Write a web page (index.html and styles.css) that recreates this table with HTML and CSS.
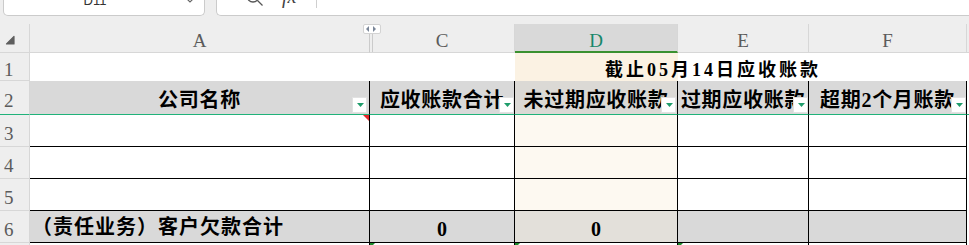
FILE: index.html
```html
<!DOCTYPE html>
<html lang="zh-CN">
<head>
<meta charset="utf-8">
<title>应收账款</title>
<link rel="stylesheet" href="styles.css">
</head>
<body>
<div class="toolbar">
  <div class="namebox">
    <span class="cellref">D11</span>
    <svg class="chev" viewBox="0 0 8 6"><polyline points="0.5,0.5 4,4 7.5,0.5"/></svg>
  </div>
  <div class="formula">
    <svg class="search" viewBox="0 0 20 16"><circle cx="8" cy="6" r="6"/><line x1="12.5" y1="10.5" x2="17.5" y2="15.5"/></svg>
    <span class="fx">fx</span>
    <span class="fsep"></span>
  </div>
</div>

<div class="sheet">
  <div class="strip"></div>

  <!-- column headers -->
  <div class="corner"><svg width="29" height="28" viewBox="0 0 29 28"><path d="M14 12.5 L14 20 L6.5 20 Z"/></svg></div>
  <div class="ch ch-a">A<span class="unhide"><svg viewBox="0 0 16 8"><polygon points="5,1 5,7 2,4"/><polygon points="9,1 9,7 12,4"/></svg></span></div>
  <div class="ch ch-c">C</div>
  <div class="ch ch-sel">D</div>
  <div class="ch">E</div>
  <div class="ch">F</div>
  <div class="ch ch-g"></div>

  <!-- row 1 -->
  <div class="rh">1</div>
  <div class="c"></div>
  <div class="c"></div>
  <div class="c title">截止05月14日应收账款</div>
  <div class="c"></div>

  <!-- row 2: table headings with filter buttons -->
  <div class="rh rh-frozen">2</div>
  <div class="c hd">公司名称<span class="fbtn fbtn-a"></span></div>
  <div class="c hd">应收账款合计<span class="fbtn"></span></div>
  <div class="c hd hd-sel">未过期应收账款<span class="fbtn fbtn-d"></span></div>
  <div class="c hd">过期应收账款<span class="fbtn"></span></div>
  <div class="c hd">超期2个月账款<span class="fbtn"></span></div>
  <div class="c frozen"></div>

  <!-- rows 3-5 -->
  <div class="rh">3</div>
  <div class="c b note"></div>
  <div class="c b"></div>
  <div class="c b sel"></div>
  <div class="c b"></div>
  <div class="c b"></div>
  <div class="c"></div>

  <div class="rh">4</div>
  <div class="c b"></div>
  <div class="c b"></div>
  <div class="c b sel"></div>
  <div class="c b"></div>
  <div class="c b"></div>
  <div class="c"></div>

  <div class="rh">5</div>
  <div class="c b"></div>
  <div class="c b"></div>
  <div class="c b sel"></div>
  <div class="c b"></div>
  <div class="c b"></div>
  <div class="c"></div>

  <!-- row 6: totals -->
  <div class="rh">6</div>
  <div class="c b tot tot-label">（责任业务）客户欠款合计</div>
  <div class="c b tot tot-num">0</div>
  <div class="c b tot tot-sel tot-num">0</div>
  <div class="c b tot"></div>
  <div class="c b tot"></div>
  <div class="c"></div>

  <!-- row 7 -->
  <div class="rh"></div>
  <div class="c r7"></div>
  <div class="c r7 err"></div>
  <div class="c r7 err"></div>
  <div class="c r7 err"></div>
  <div class="c r7"></div>
  <div class="c"></div>
</div>
</body>
</html>
```

FILE: styles.css
```css
* { box-sizing: border-box; }
html, body { margin: 0; }
body {
  width: 969px;
  height: 245px;
  overflow: hidden;
  background: #fff;
  font-family: "Liberation Serif", "Noto Sans CJK SC", serif;
}

/* name box + formula bar */
.toolbar { display: flex; height: 16px; background: #eeeeee; }
.namebox {
  display: flex;
  width: 202px;
  height: 16px;
  margin-left: 3px;
  background: #fff;
  border: 1px solid #cbcbcb;
  border-top: 0;
  border-radius: 0 0 5px 5px;
  overflow: hidden;
}
.cellref {
  flex: 1;
  margin-top: -6px;
  font: 13px/13px "Liberation Sans", sans-serif;
  color: #333;
  text-align: center;
}
.chev { width: 8px; height: 6px; margin: -2px 10px 0 0; fill: none; stroke: #666; stroke-width: 1.2; }
.formula {
  display: flex;
  flex: 1;
  height: 16px;
  margin-left: 11px;
  background: #fff;
  border-left: 1px solid #cbcbcb;
  border-bottom: 1px solid #cbcbcb;
  border-bottom-left-radius: 5px;
  overflow: hidden;
}
.search { flex: none; width: 20px; height: 16px; margin: -10px 0 0 28px; fill: none; stroke: #555; stroke-width: 1.3; }
.fx { flex: none; width: 34px; margin: -14px 0 0 17px; font: italic 20px/20px "Liberation Serif", serif; color: #444; }
.fsep { flex: none; width: 1px; height: 8px; background: #cfcfcf; }

/* sheet grid */
.sheet {
  display: grid;
  grid-template-columns: 30px 340px 145px 163px 131px 158px 1fr;
  grid-template-rows: 8px 29px 28px 34px repeat(4, 32px) 12px;
}
.strip { grid-column: 1 / -1; background: #eee; }

.corner, .ch, .rh {
  background: #eee;
  border-right: 1px solid #d7d7d7;
  border-bottom: 1px solid #d7d7d7;
  color: #5b5b5b;
  font-size: 19px;
  line-height: 1;
}
.corner svg { display: block; fill: #5e5e5e; stroke: #5e5e5e; stroke-width: 1.2; stroke-linejoin: round; }

.ch { position: relative; display: flex; align-items: center; justify-content: center; padding-top: 5px; }
.ch-a { border-right-color: #cbcbcb; }
.ch-c { background: linear-gradient(to right, #eee 0 2px, #cbcbcb 2px 3px, #eee 3px); }
.ch-sel { background: #d9d9d9; color: #17876a; border-bottom: 2px solid #3a9130; }
.ch-g { border-right: 0; }
.unhide {
  position: absolute;
  top: 0;
  right: -12px;
  z-index: 2;
  width: 18px;
  height: 10px;
  background: #fff;
  border: 1px solid #d3d3d3;
  border-radius: 2px;
}
.unhide svg { display: block; width: 16px; height: 8px; fill: #7a8698; }

.rh { display: flex; align-items: center; padding: 5px 0 0 4px; }
.rh-frozen { border-bottom-color: #20b27a; }

/* cells */
.c { position: relative; overflow: hidden; white-space: nowrap; color: #000; line-height: 1; }
.b { border-right: 1px solid #000; border-bottom: 1px solid #000; }
.sel { background: #fdf9f1; }

.title {
  grid-column: span 3;
  display: flex;
  align-items: center;
  justify-content: center;
  padding: 6px 56px 0 0;
  background: linear-gradient(to right, #fbf2e3 0 163px, #fff 163px);
  font-size: 18px;
  font-weight: 700;
  letter-spacing: 3px;
}

.hd {
  display: flex;
  align-items: center;
  justify-content: center;
  padding-top: 4px;
  background: #d9d9d9;
  border-right: 1px solid #000;
  border-bottom: 1px solid #20b27a;
  font-size: 20px;
  font-weight: 700;
  letter-spacing: 0.7px;
}
.hd-sel { background: #dbd9d5; }
.frozen { border-bottom: 1px solid #20b27a; }

.fbtn {
  position: absolute;
  right: 0;
  bottom: 1px;
  width: 15px;
  height: 16px;
  background: #fff;
  border: 1px solid #e2e2e2;
}
.fbtn::after {
  content: "";
  position: absolute;
  left: 4px;
  top: 5px;
  width: 7px;
  height: 4px;
  background: #1f9d6b;
  clip-path: polygon(0 0, 100% 0, 50% 100%);
}
.fbtn-a { right: 2px; }
.fbtn-d { right: 1px; }

.note::after {
  content: "";
  position: absolute;
  top: 0;
  right: 0;
  width: 6px;
  height: 6px;
  background: #e4262a;
  clip-path: polygon(0 0, 100% 0, 100% 100%);
}

.tot { display: flex; align-items: center; background: #d9d9d9; font-weight: 700; font-size: 20px; }
.tot-sel { background: #e3e0da; }
.tot-label { padding: 1px 0 0 2px; letter-spacing: 1px; }
.tot-num { justify-content: center; padding-top: 5px; }

.r7 { border-right: 1px solid #000; }
.err::before {
  content: "";
  position: absolute;
  top: 0;
  left: 0;
  width: 5px;
  height: 5px;
  background: #1b8a2c;
  clip-path: polygon(0 0, 100% 0, 0 100%);
}
```
